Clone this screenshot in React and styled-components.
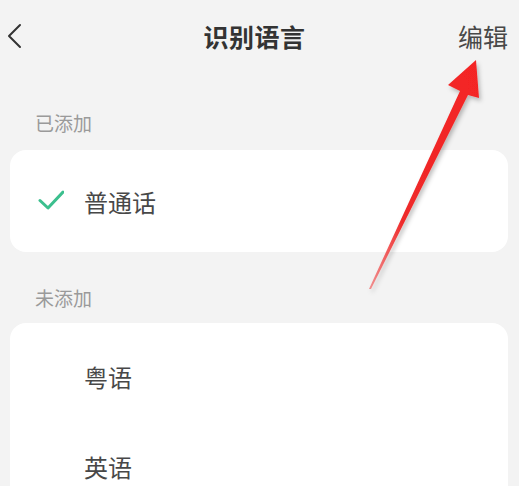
import React from "react";
import styled, { createGlobalStyle } from "styled-components";

const Global = createGlobalStyle`
  html, body { margin: 0; padding: 0; background: #f3f3f3; }
  body { font-family: "Noto Sans CJK SC", "Noto Sans", sans-serif; overflow: hidden; }
`;

const Page = styled.div`
  position: relative;
  width: 519px;
  height: 486px;
  background: #f3f3f3;
  overflow: hidden;
`;

const Header = styled.header`
  height: 72px;
  display: grid;
  grid-template-columns: 70px 1fr 80px;
  align-items: center;
`;

const BackButton = styled.div`
  display: flex;
  align-items: center;
  padding-left: 6px;
`;

const Title = styled.h1`
  margin: 0;
  text-align: center;
  font-size: 25px;
  font-weight: 700;
  color: #333;
  letter-spacing: 0.5px;
`;

const Action = styled.div`
  text-align: right;
  padding-right: 11px;
  font-size: 25px;
  color: #484848;
`;

const SectionLabel = styled.div`
  margin-top: ${(p) => p.$top}px;
  padding-left: 35px;
  font-size: 19px;
  line-height: 26px;
  color: #9a9a9a;
`;

const Card = styled.div`
  margin: ${(p) => p.$top}px 11px 0 10px;
  background: #fff;
  border-radius: 16px;
  padding: ${(p) => p.$pad}px 0;
`;

const Row = styled.div`
  height: ${(p) => p.$h}px;
  display: flex;
  align-items: center;
  padding-left: 28px;
  gap: 20px;
`;

const IconSlot = styled.div`
  width: 26px;
  height: 26px;
  display: flex;
  align-items: center;
  justify-content: center;
`;

const RowText = styled.span`
  font-size: 24px;
  color: #484848;
`;

const ArrowLayer = styled.svg`
  position: absolute;
  left: 0;
  top: 0;
  pointer-events: none;
`;

const Check = () => (
  <svg width="26" height="26" viewBox="0 0 26 26">
    <path d="M2 12.5 L10 20 L25 4" fill="none" stroke="#3cbf8e" strokeWidth="3" strokeLinecap="round" strokeLinejoin="round" />
  </svg>
);

export default function App() {
  return (
    <Page>
      <Global />
      <Header>
        <BackButton>
          <svg width="20" height="28" viewBox="0 0 20 28">
            <path d="M14 3 L3 14 L14 25" fill="none" stroke="#333" strokeWidth="2" strokeLinecap="round" strokeLinejoin="round" />
          </svg>
        </BackButton>
        <Title>识别语言</Title>
        <Action>编辑</Action>
      </Header>

      <SectionLabel $top={38}>已添加</SectionLabel>
      <Card $top={14} $pad={0}>
        <Row $h={102}>
          <IconSlot><Check /></IconSlot>
          <RowText>普通话</RowText>
        </Row>
      </Card>

      <SectionLabel $top={33}>未添加</SectionLabel>
      <Card $top={12} $pad={8}>
        <Row $h={90}>
          <IconSlot />
          <RowText>粤语</RowText>
        </Row>
        <Row $h={90}>
          <IconSlot />
          <RowText>英语</RowText>
        </Row>
      </Card>

      <ArrowLayer width="519" height="486" viewBox="0 0 519 486">
        <defs>
          <filter id="sh" x="-20%" y="-20%" width="140%" height="140%">
            <feDropShadow dx="2" dy="3" stdDeviation="2" floodColor="#000" floodOpacity="0.25" />
          </filter>
          <linearGradient id="g" x1="0" y1="1" x2="1" y2="0">
            <stop offset="0" stopColor="#f05050" stopOpacity="0.6" />
            <stop offset="0.3" stopColor="#ee2a2a" />
            <stop offset="1" stopColor="#f42424" />
          </linearGradient>
        </defs>
        <polygon
          filter="url(#sh)"
          fill="url(#g)"
          points="369,289 460,91 448,85 476,60 479,98 468,95 371,289"
        />
      </ArrowLayer>
    </Page>
  );
}
